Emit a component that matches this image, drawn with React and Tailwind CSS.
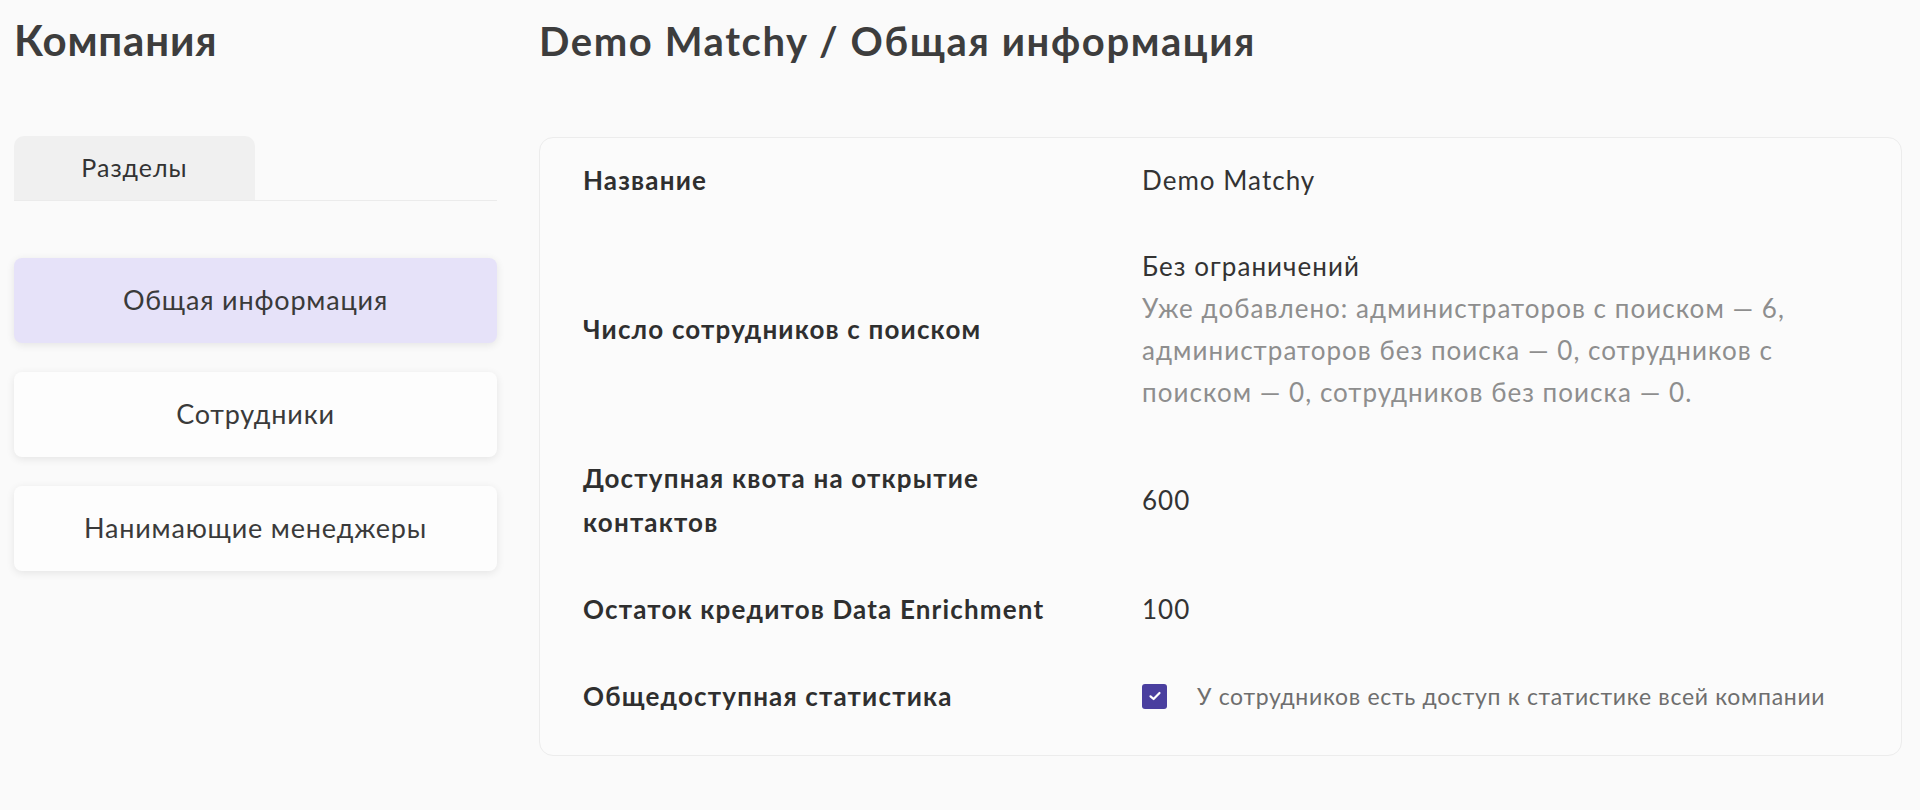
import React from "react";

function NavItem({ label, active }) {
  return (
    <div
      className={
        "flex h-[85px] items-center justify-center rounded-[8px] text-[27px] tracking-[0.03em] text-[#3a3a3a] shadow-[0_2px_8px_rgba(0,0,0,0.09)] " +
        (active ? "bg-[#e6e2f9]" : "bg-[#fdfdfd]")
      }
    >
      {label}
    </div>
  );
}

function Row({ label, children }) {
  return (
    <div className="flex items-center">
      <div className="w-[559px] shrink-0 text-[26px] font-bold leading-[44px] tracking-[0.045em] text-[#2f2f2f]">{label}</div>
      <div className="flex-1 text-[26px] leading-[42px] tracking-[0.04em] text-[#333333]">{children}</div>
    </div>
  );
}

export default function App() {
  return (
    <div
      className="flex min-h-[810px] w-full bg-[#fafafa] pl-[14px] pr-[18px]"
      style={{ fontFamily: "Lato, 'Noto Sans', sans-serif" }}
    >
      {/* Left column */}
      <div className="flex w-[483px] shrink-0 flex-col">
        <h1 className="mt-[15px] text-[42px] font-bold leading-[50px] tracking-[0.02em] text-[#3d3d3d]">Компания</h1>
        <div className="mt-[71px] flex border-b border-[#ebebeb]">
          <div className="flex h-[64px] w-[241px] items-center justify-center rounded-t-[10px] bg-[#f0f0f0] text-[25px] tracking-[0.04em] text-[#333333]">
            Разделы
          </div>
        </div>
        <div className="mt-[57px] flex flex-col gap-[29px]">
          <NavItem label="Общая информация" active />
          <NavItem label="Сотрудники" />
          <NavItem label="Нанимающие менеджеры" />
        </div>
      </div>

      {/* Right column */}
      <div className="ml-[42px] flex flex-1 flex-col">
        <h2 className="mt-[16px] text-[40px] font-bold leading-[50px] tracking-[0.04em] text-[#3d3d3d]">
          Demo Matchy / Общая информация
        </h2>
        <div className="mt-[71px] flex flex-col gap-[43px] rounded-[14px] border border-[#ececec] bg-[#fbfbfb] pb-[37px] pl-[43px] pr-[43px] pt-[20px]">
          <Row label="Название">
            <div>Demo Matchy</div>
          </Row>
          <Row label="Число сотрудников с поиском">
            <div>Без ограничений</div>
            <div className="text-[#8e8e8e]">
              Уже добавлено: администраторов с поиском — 6,
              <br />
              администраторов без поиска — 0, сотрудников с
              <br />
              поиском — 0, сотрудников без поиска — 0.
            </div>
          </Row>
          <Row
            label={
              <>
                Доступная квота на открытие
                <br />
                контактов
              </>
            }
          >
            <div>600</div>
          </Row>
          <Row label="Остаток кредитов Data Enrichment">
            <div>100</div>
          </Row>
          <Row label="Общедоступная статистика">
            <div className="flex items-center gap-[30px]">
              <div className="flex h-[25px] w-[25px] shrink-0 items-center justify-center rounded-[3px] bg-[#4a3f9f]">
                <svg width="16" height="16" viewBox="0 0 16 16" fill="none">
                  <path d="M3.5 8.3 L6.6 11 L12.5 5" stroke="white" strokeWidth="2.2" strokeLinecap="round" strokeLinejoin="round" />
                </svg>
              </div>
              <span className="text-[23px] tracking-[0.03em] text-[#6e6e6e]">У сотрудников есть доступ к статистике всей компании</span>
            </div>
          </Row>
        </div>
      </div>
    </div>
  );
}
